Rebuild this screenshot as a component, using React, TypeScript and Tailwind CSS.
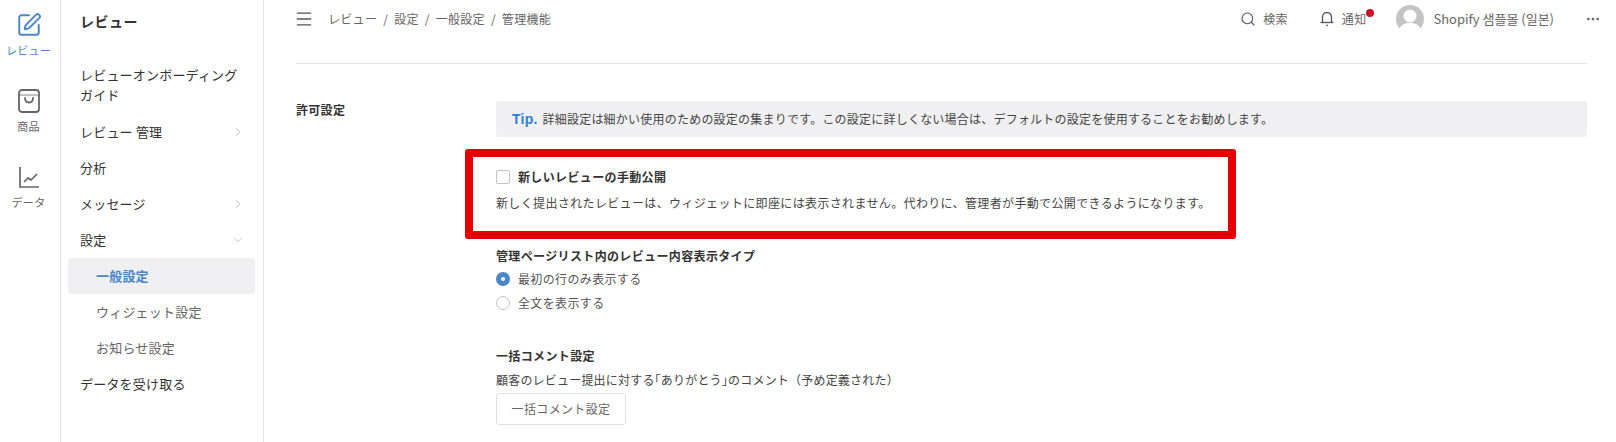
import { ChevronDown, ChevronRight, Menu, Search, MoreHorizontal, SquarePen } from 'lucide-react'

function RailItem({ icon, label, active }: { icon: React.ReactNode; label: string; active?: boolean }) {
  return (
    <div className={`flex flex-col items-center h-[76px] ${active ? 'text-[#4a86c8]' : 'text-[#666]'}`}>
      {icon}
      <span className="text-[11px] leading-[16px] mt-[4px] tracking-[0.3px]">{label}</span>
    </div>
  )
}

function NavItem({ label, arrow }: { label: string; arrow?: 'right' | 'down' }) {
  return (
    <div className="flex items-center justify-between h-[36px] pl-[19px] pr-[18px] text-[13px] tracking-[0.2px] text-[#333]">
      <span>{label}</span>
      {arrow === 'right' && <ChevronRight size={14} strokeWidth={1} className="text-[#999]" />}
      {arrow === 'down' && <ChevronDown size={14} strokeWidth={1} className="text-[#999]" />}
    </div>
  )
}

function SubItem({ label, active }: { label: string; active?: boolean }) {
  return (
    <div
      className={`flex items-center h-[36px] ml-[7px] mr-[8px] pl-[28px] rounded-[4px] text-[13px] tracking-[0.2px] ${
        active ? 'bg-[#f0f0f2] text-[#4a86c8] font-bold' : 'text-[#666]'
      }`}
    >
      {label}
    </div>
  )
}

export default function App() {
  return (
    <div className="flex h-[442px] w-[1616px] overflow-hidden bg-white font-['Noto_Sans_CJK_JP','Noto_Sans',sans-serif]">
      <aside className="w-[61px] shrink-0 border-r border-[#e3e3e3] pt-[12px] pr-[3px]">
        <RailItem
          active
          label="レビュー"
          icon={<SquarePen size={26} strokeWidth={1.8} />}
        />
        <RailItem
          label="商品"
          icon={
            <svg width="24" height="26" viewBox="0 0 24 26" fill="none" stroke="currentColor" strokeWidth="1.8">
              <rect x="2" y="2" width="20" height="22" rx="3" />
              <path d="M2 7h20" strokeWidth="0.8" />
              <path d="M8 10c0 3 2 4.5 4 4.5s4-1.500 4-4.500" strokeLinecap="round" />
            </svg>
          }
        />
        <RailItem
          label="データ"
          icon={
            <svg width="24" height="26" viewBox="0 0 24 26" fill="none" stroke="currentColor" strokeWidth="1.7">
              <path d="M3 3v20h19" />
              <path d="M7 18l4-4 3 2 6-6" strokeLinejoin="round" />
            </svg>
          }
        />
      </aside>

      <nav className="w-[203px] shrink-0 border-r border-[#e3e3e3]">
        <div className="h-[46px] pl-[19px] pt-[11px] text-[14px] leading-[20px] font-bold text-[#333] tracking-[0.5px]">レビュー</div>
        <div className="mt-[16px] pl-[19px] pr-[18px] text-[13px] leading-[20px] tracking-[0.2px] text-[#333] h-[52px] pt-[3px]">
          レビューオンボーディングガイド
        </div>
        <NavItem label="レビュー 管理" arrow="right" />
        <NavItem label="分析" />
        <NavItem label="メッセージ" arrow="right" />
        <NavItem label="設定" arrow="down" />
        <SubItem label="一般設定" active />
        <SubItem label="ウィジェット設定" />
        <SubItem label="お知らせ設定" />
        <NavItem label="データを受け取る" />
      </nav>

      <main className="flex-1 pl-[32px] pr-[29px]">
        <header className="flex items-center h-[64px] pb-[26px] border-b border-[#e3e3e3] text-[12px] text-[#666]">
          <Menu size={20} strokeWidth={1.6} className="text-[#555] -ml-[2px]" />
          <span className="ml-[14px] tracking-[0.3px]">レビュー&nbsp;&nbsp;/&nbsp;&nbsp;設定&nbsp;&nbsp;/&nbsp;&nbsp;一般設定&nbsp;&nbsp;/&nbsp;&nbsp;管理機能</span>
          <div className="ml-auto -mr-[14px] flex items-center">
            <Search size={16} strokeWidth={1.6} className="text-[#555]" />
            <span className="ml-[7px] tracking-[0.3px]">検索</span>
            <svg width="16" height="17" viewBox="0 0 16 17" fill="none" stroke="#555" strokeWidth="1.3" className="ml-[31px]">
              <path d="M3.500 12.500V7a4.500 4.500 0 0 1 9 0v5.500" />
              <path d="M1.500 12.500h13" />
              <circle cx="8" cy="15.300" r="0.900" fill="#555" stroke="none" />
            </svg>
            <span className="relative ml-[7px] tracking-[0.3px]">
              通知
              <span className="absolute -right-[8px] top-[-1px] h-[8px] w-[8px] rounded-full bg-[#cf1322]" />
            </span>
            <svg width="28" height="28" viewBox="0 0 28 28" className="ml-[30px]">
              <circle cx="14" cy="14" r="14" fill="#c4c4c4" />
              <circle cx="14" cy="11" r="6.500" fill="#fff" />
              <path d="M3 25c2-6 6-7 11-7s9 1 11 7a14 14 0 0 1-22 0z" fill="#fff" />
            </svg>
            <span className="ml-[9px] text-[13px]">Shopify 샘플몰 (일본)</span>
            <MoreHorizontal size={16} className="ml-[31px] text-[#666]" />
          </div>
        </header>

        <section className="flex pt-[37px]">
          <div className="w-[200px] shrink-0 text-[12px] leading-[18px] font-bold text-[#333] tracking-[0.3px]">許可設定</div>
          <div className="flex-1 text-[12px] tracking-[0.36px]">
            <div className="flex items-center h-[36px] rounded-[3px] bg-[#f0f0f2] pl-[16px] text-[#444] tracking-[0.22px]">
              <span className="mr-[5px] text-[14px] font-bold text-[#2f7fd8] font-['Liberation_Sans',sans-serif]">Tip.</span>
              詳細設定は細かい使用のための設定の集まりです。この設定に詳しくない場合は、デフォルトの設定を使用することをお勧めします。
            </div>

            <div className="mt-[12px] -ml-[31px] w-[771px] h-[90px] rounded-[3px] border-[8px] border-[#e60000] pl-[23px] pt-[8px]">
              <label className="flex items-center h-[24px]">
                <span className="h-[14px] w-[14px] rounded-[2px] border border-[#c4c4c4] bg-white" />
                <span className="ml-[8px] font-bold text-[#333]">新しいレビューの手動公開</span>
              </label>
              <p className="mt-[2px] leading-[24px] text-[#444]">
                新しく提出されたレビューは、ウィジェットに即座には表示されません。代わりに、管理者が手動で公開できるようになります。
              </p>
            </div>

            <h3 className="mt-[7px] leading-[20px] font-bold text-[#333]">管理ページリスト内のレビュー内容表示タイプ</h3>
            <div className="mt-[1px] flex items-center h-[24px] text-[#555]">
              <span className="flex h-[14px] w-[14px] items-center justify-center rounded-full bg-[#4a86c8]">
                <span className="h-[4px] w-[4px] rounded-full bg-white" />
              </span>
              <span className="ml-[8px]">最初の行のみ表示する</span>
            </div>
            <div className="flex items-center h-[24px] text-[#555]">
              <span className="h-[14px] w-[14px] rounded-full border border-[#c4c4c4]" />
              <span className="ml-[8px]">全文を表示する</span>
            </div>

            <h3 className="mt-[31px] leading-[20px] font-bold text-[#333]">一括コメント設定</h3>
            <p className="mt-[4px] leading-[20px] text-[#444] tracking-[0.2px]">
              顧客のレビュー提出に対する<span className="[font-feature-settings:'halt']">「</span>ありがとう<span className="[font-feature-settings:'halt']">」</span>のコメント（予め定義された）
            </p>
            <button className="mt-[3px] h-[32px] w-[130px] rounded-[3px] border border-[#e0e0e0] bg-white text-[#666]">
              一括コメント設定
            </button>
          </div>
        </section>
      </main>
    </div>
  )
}
